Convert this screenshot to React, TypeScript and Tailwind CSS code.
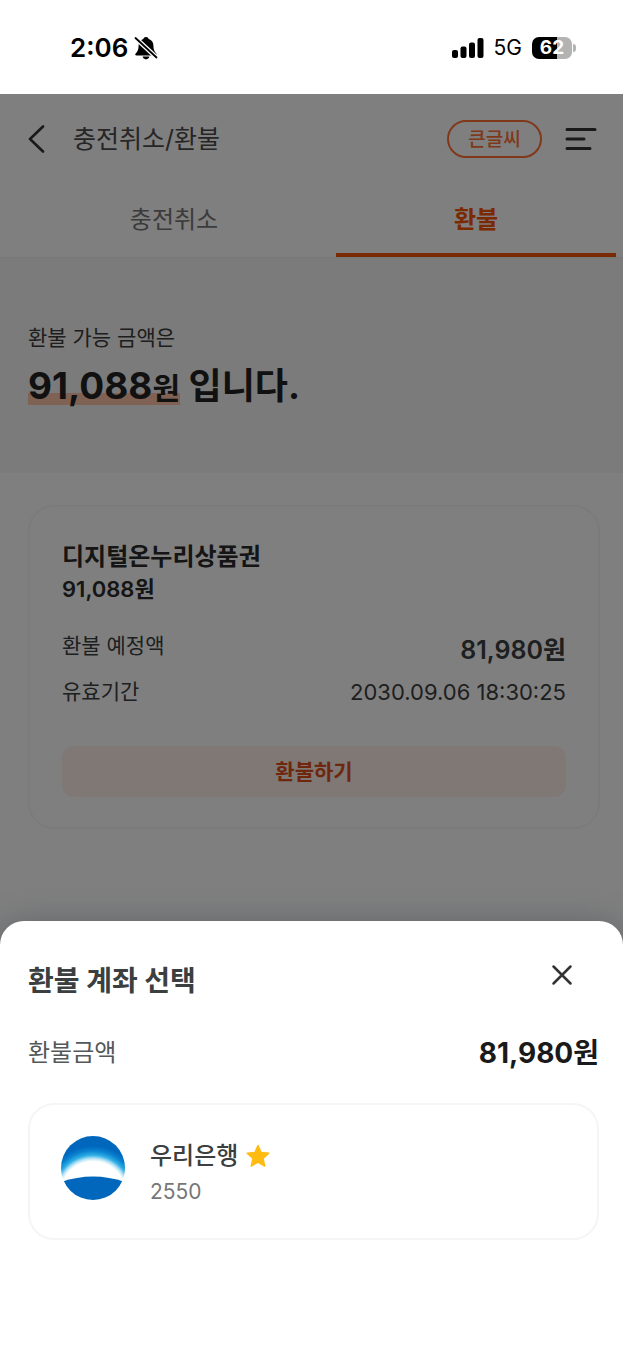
import type { ReactNode } from "react";

function BellOffIcon() {
  return (
    <svg width="24" height="24" viewBox="0 0 24 24" aria-hidden="true">
      <path
        d="M12 1C13.4 1 14.4 1.8 14.7 2.9C17.8 3.9 19.4 6.4 19.4 9.4C19.4 13.6 20.4 15.3 22.3 17.4C23.2 18.5 22.7 19.4 21.5 19.4H2.5C1.3 19.4 0.8 18.5 1.7 17.4C3.6 15.3 4.6 13.6 4.6 9.4C4.6 6.4 6.2 3.9 9.3 2.9C9.6 1.8 10.6 1 12 1Z"
        fill="black"
      />
      <path d="M8.6 20.6H15.4C15 22.4 13.7 23.4 12 23.4C10.3 23.4 9 22.4 8.6 20.6Z" fill="black" />
      <path d="M0.5 1.1L23.5 22.4" stroke="white" strokeWidth="4.6" />
      <path d="M1.5 2L22.5 21.5" stroke="black" strokeWidth="1.8" strokeLinecap="round" />
    </svg>
  );
}

function SignalIcon() {
  return (
    <svg width="32" height="20" viewBox="0 0 32 20" aria-hidden="true">
      <rect x="0" y="12" width="6" height="8" rx="2" />
      <rect x="8.5" y="8.5" width="6" height="11.5" rx="2" />
      <rect x="17" y="4.5" width="6" height="15.5" rx="2" />
      <rect x="25.5" y="0" width="6" height="20" rx="2" />
    </svg>
  );
}

function BankLogo() {
  return (
    <svg width="64" height="64" viewBox="0 0 64 64" aria-hidden="true">
      <defs>
        <radialGradient id="dawn" gradientUnits="userSpaceOnUse" cx="32" cy="58" r="48">
          <stop offset="0.68" stopColor="#ffffff" />
          <stop offset="0.74" stopColor="#b5e3f6" />
          <stop offset="0.81" stopColor="#2eaee4" />
          <stop offset="0.9" stopColor="#0a83d0" />
          <stop offset="1" stopColor="#0067bd" />
        </radialGradient>
        <clipPath id="disc">
          <circle cx="32" cy="32" r="32" />
        </clipPath>
      </defs>
      <g clipPath="url(#disc)">
        <rect width="64" height="64" fill="url(#dawn)" />
        <path d="M0 46Q32 35 64 46V64H0Z" fill="#0067bd" />
      </g>
    </svg>
  );
}

function StatusBar() {
  return (
    <div className="flex h-[94px] items-center justify-between bg-white pt-0.5 pr-[47px] pl-[70px] text-black">
      <div className="flex items-center gap-1.5">
        <span className="text-[26px] leading-8 font-semibold">2:06</span>
        <BellOffIcon />
      </div>
      <div className="flex items-center gap-2.5">
        <SignalIcon />
        <span className="text-[21px] leading-8">5G</span>
        <div className="flex items-center gap-px">
          <div className="flex h-[22px] w-10 items-center justify-center rounded-[7px] bg-[linear-gradient(90deg,#000_62%,#b3b3b3_62%)] text-[19px] font-bold text-white">
            62
          </div>
          <div className="h-2 w-[3px] rounded-r-full bg-[#b3b3b3]" />
        </div>
      </div>
    </div>
  );
}

function Row({ label, children }: { label: string; children: ReactNode }) {
  return (
    <div className="flex justify-between text-[#3c3f40]">
      <dt className="text-[21px] leading-8">{label}</dt>
      <dd>{children}</dd>
    </div>
  );
}

export default function App() {
  return (
    <div className="flex min-h-screen flex-col bg-white font-['Inter','Noto_Sans_CJK_KR',sans-serif]">
      <StatusBar />

      <main className="relative pb-[116px]">
        <header className="flex h-[88px] items-center justify-between pt-0.5 pr-[26px] pl-7">
          <div className="flex items-center gap-7">
            <button aria-label="뒤로" className="text-[#333]">
              <svg width="17" height="28" viewBox="0 0 17 28" fill="none">
                <path d="M15 1.5L2 14L15 26.5" stroke="currentColor" strokeWidth="2.6" strokeLinecap="round" strokeLinejoin="round" />
              </svg>
            </button>
            <h1 className="text-[25px] leading-8 text-[#4c4c4c]">충전취소/환불</h1>
          </div>
          <div className="flex items-center gap-[23px]">
            <button className="h-[38px] w-[95px] rounded-full border-2 border-[#ff7034] pt-0.5 text-[19px] leading-8 font-medium text-[#ff7034]">
              큰글씨
            </button>
            <button aria-label="메뉴" className="text-[#333]">
              <svg width="32" height="24" viewBox="0 0 32 24" fill="none" stroke="currentColor" strokeWidth="3" strokeLinecap="round">
                <path d="M2 2.5H30M2 12H19M2 21.5H25" />
              </svg>
            </button>
          </div>
        </header>

        <nav className="grid h-[76px] grid-cols-2 gap-[22px] border-b border-[#eee] pr-[7px] pl-[34px]">
          <button className="border-b-4 border-transparent pt-1 text-2xl text-[#777]">충전취소</button>
          <button className="border-b-4 border-[#f55200] pt-1 text-2xl font-bold text-[#f55200]">환불</button>
        </nav>

        <section className="bg-[#f7f7f7] px-7 pt-16 pb-[60px]">
          <p className="text-[21px] leading-8 text-[#3c3c3c]">환불 가능 금액은</p>
          <p className="mt-[7px] text-[36px] leading-[50px] font-bold text-[#222]">
            <span className="inline-block bg-[linear-gradient(#ffc4a8,#ffc4a8)] bg-[length:100%_12px] bg-[position:0_32px] bg-no-repeat text-[37px]">
              91,088<span className="text-[30px]">원</span>
            </span>{" "}
            입니다.
          </p>
        </section>

        <section className="mt-8 mr-[23px] ml-7 rounded-[26px] border-2 border-[#f4f6f6] px-8 pt-[34px] pb-[30px]">
          <h2 className="text-2xl leading-8 font-bold text-[#2a2a2a]">디지털온누리상품권</h2>
          <p className="text-[22px] leading-8 font-semibold text-[#2a2a2a]">91,088원</p>
          <dl className="mt-[25px] space-y-1.5">
            <Row label="환불 예정액">
              <span className="text-[25px] leading-10 font-semibold">81,980원</span>
            </Row>
            <Row label="유효기간">
              <span className="text-[22px] leading-8">2030.09.06 18:30:25</span>
            </Row>
          </dl>
          <button className="mt-[38px] h-[51px] w-full rounded-xl bg-[#fff0eb] text-[21px] font-bold text-[#dd4f18]">
            환불하기
          </button>
        </section>

        {/* Scrim */}
        <div className="absolute inset-0 bg-black/50" />
      </main>

      <section
        role="dialog"
        aria-labelledby="sheet-title"
        className="relative -mt-6 flex-1 rounded-t-3xl bg-white pt-10 pr-6 pl-7 shadow-[0_0_28px_rgba(80,90,95,0.6)]"
      >
        <div className="flex justify-between pr-[25px]">
          <h2 id="sheet-title" className="text-[28px] leading-10 font-bold text-[#3c3f40]">
            환불 계좌 선택
          </h2>
          <button aria-label="닫기" className="flex h-7 items-center text-[#333]">
            <svg width="24" height="24" viewBox="0 0 24 24" fill="none">
              <path d="M3.5 3.5L20.5 20.5M20.5 3.5L3.5 20.5" stroke="currentColor" strokeWidth="2.5" strokeLinecap="round" />
            </svg>
          </button>
        </div>

        <div className="mt-8 flex items-center justify-between">
          <span className="text-2xl leading-10 text-[#555859]">환불금액</span>
          <span className="text-[28px] leading-10 font-bold text-[#1a1a1a]">81,980원</span>
        </div>

        <button className="mt-[30px] flex w-full items-start gap-[25px] rounded-[26px] border-2 border-[#f4f6f6] px-[31px] pt-[31px] pb-7 text-left">
          <BankLogo />
          <span className="pt-0.5">
            <span className="flex items-center gap-2 text-2xl leading-9 font-medium text-[#3c3f40]">
              우리은행
              <svg width="24" height="24" viewBox="0 0 24 24" aria-label="즐겨찾기">
                <path
                  d="M12 1.5L15.1 8.6L22.8 9.3L17 14.4L18.7 22L12 18L5.3 22L7 14.4L1.2 9.3L8.9 8.6Z"
                  fill="#ffbb12"
                  stroke="#ffbb12"
                  strokeWidth="1.5"
                  strokeLinejoin="round"
                />
              </svg>
            </span>
            <span className="block text-[21px] leading-9 text-[#777]">2550</span>
          </span>
        </button>
      </section>
    </div>
  );
}
